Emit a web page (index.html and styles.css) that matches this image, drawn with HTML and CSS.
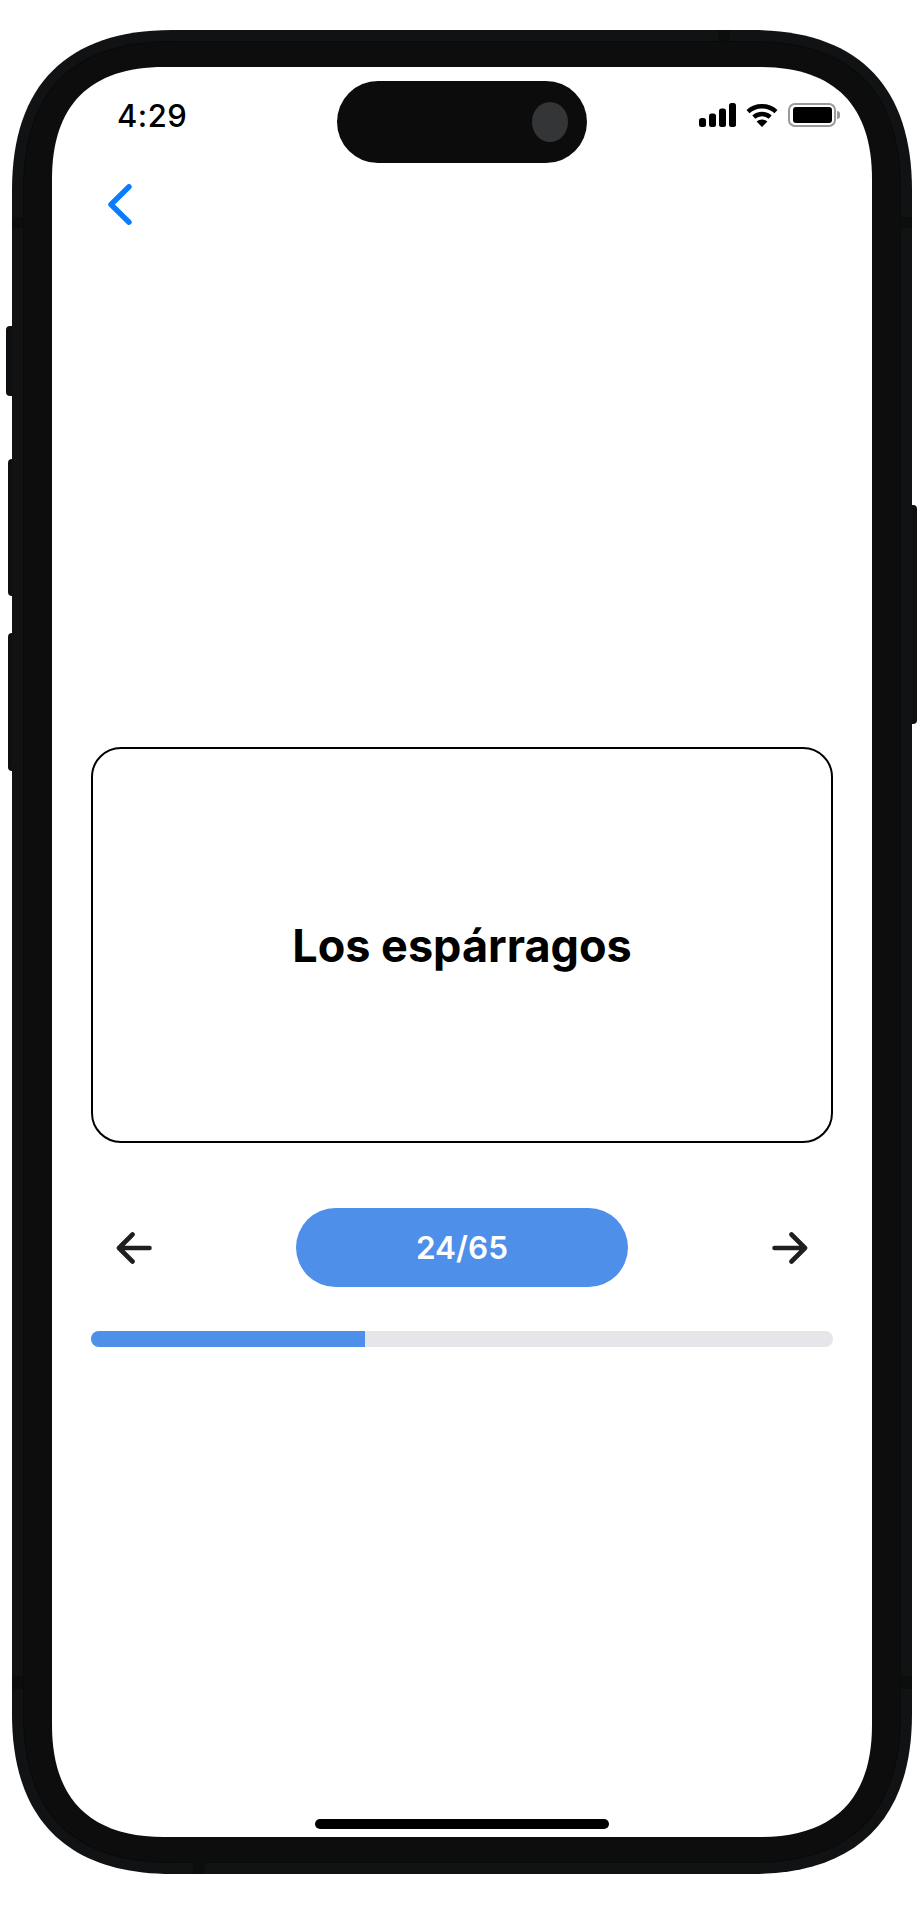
FILE: index.html
```html
<!DOCTYPE html>
<html lang="es">
<head>
    <meta charset="UTF-8">
    <title>Los espárragos</title>
    <link rel="stylesheet" href="styles.css">
</head>
<body>
<div class="phone">
    <span class="side-btn mute"></span>
    <span class="side-btn vol-up"></span>
    <span class="side-btn vol-down"></span>
    <span class="side-btn power"></span>
    <div class="shell">
        <span class="band band-top"></span>
        <span class="band band-bottom"></span>
        <span class="band band-left-a"></span>
        <span class="band band-left-b"></span>
        <span class="band band-right-a"></span>
        <span class="band band-right-b"></span>
        <div class="rim">
            <div class="bezel">
                <div class="screen">
                    <div class="status-bar">
                        <span class="time">4:29</span>
                        <div class="island"><span class="camera"></span></div>
                        <div class="status-icons">
                            <svg width="37" height="24" viewBox="0 0 37 24" fill="#000">
                                <rect x="0" y="15" width="7" height="9" rx="2.5"/>
                                <rect x="10" y="10.5" width="7" height="13.5" rx="2.5"/>
                                <rect x="20" y="5.5" width="7" height="18.5" rx="2.5"/>
                                <rect x="30" y="0" width="7" height="24" rx="2.5"/>
                            </svg>
                            <svg width="32" height="24" viewBox="0 0 32 24" fill="none" stroke="#000" stroke-width="4.4">
                                <path d="M2 8.6C9.8 1.4 22.2 1.4 30 8.6"/>
                                <path d="M7.8 14.2C12.4 10 19.6 10 24.2 14.2"/>
                                <path d="M16 24L10.6 18.6C13.6 15.9 18.4 15.9 21.4 18.6Z" fill="#000" stroke="none"/>
                            </svg>
                            <div class="battery">
                                <div class="battery-body"><span class="battery-level"></span></div>
                                <span class="battery-tip"></span>
                            </div>
                        </div>
                    </div>

                    <button class="back-btn">
                        <svg width="24" height="41" viewBox="0 0 24 41" fill="none" stroke="#0a7cff" stroke-width="5.4" stroke-linecap="round" stroke-linejoin="round">
                            <path d="M21 2.8L3 20.5L21 38.2"/>
                        </svg>
                    </button>

                    <div class="deck">
                        <div class="card">Los espárragos</div>
                        <div class="nav-row">
                            <svg class="arrow" width="36" height="32" viewBox="0 0 36 32" fill="none" stroke="#1f1f1f" stroke-width="4.6" stroke-linecap="round" stroke-linejoin="round">
                                <path d="M33.5 16H3.5M16.5 2.5L3 16L16.5 29.5"/>
                            </svg>
                            <div class="counter">24/65</div>
                            <svg class="arrow" width="36" height="32" viewBox="0 0 36 32" fill="none" stroke="#1f1f1f" stroke-width="4.6" stroke-linecap="round" stroke-linejoin="round">
                                <path d="M2.5 16H32.5M19.5 2.5L33 16L19.5 29.5"/>
                            </svg>
                        </div>
                        <div class="progress">
                            <div class="progress-fill" style="width: 36.92%"></div>
                        </div>
                    </div>

                    <div class="home-indicator"></div>
                </div>
            </div>
        </div>
    </div>
</div>
</body>
</html>
```

FILE: styles.css
```css
body {
    margin: 0;
    background: #fff;
    font-family: Inter, "Liberation Sans", sans-serif;
}
.phone {
    position: relative;
    width: 900px;
    height: 1844px;
    margin: 30px 0 0 12px;
}
.side-btn {
    position: absolute;
    background: #0e0f10;
}
.mute {
    left: -6px;
    top: 296px;
    width: 6px;
    height: 70px;
    border-radius: 4px 0 0 4px;
}
.vol-up {
    left: -4px;
    top: 429px;
    width: 4px;
    height: 137px;
    border-radius: 4px 0 0 4px;
}
.vol-down {
    left: -4px;
    top: 603px;
    width: 4px;
    height: 138px;
    border-radius: 4px 0 0 4px;
}
.power {
    right: -5px;
    top: 475px;
    width: 5px;
    height: 219px;
    border-radius: 0 4px 4px 0;
}

/* the corners are squircles, so border-radius is not close enough */
.shell {
    position: relative;
    height: 100%;
    padding: 11px;
    box-sizing: border-box;
    background: #101214;
    clip-path: path("M0 160C0 55 55 0 160 0H740C845 0 900 55 900 160V1684C900 1789 845 1844 740 1844H160C55 1844 0 1789 0 1684Z");
}
.rim {
    height: 100%;
    padding: 1px;
    box-sizing: border-box;
    background: #090a0a;
    clip-path: path("M0 150C0 49 49 0 150 0H728C829 0 878 49 878 150V1672C878 1773 829 1822 728 1822H150C49 1822 0 1773 0 1672Z");
}
.bezel {
    height: 100%;
    padding: 25px 28px;
    box-sizing: border-box;
    background: #0d0d0d;
    clip-path: path("M0 149C0 49 49 0 149 0H727C827 0 876 49 876 149V1671C876 1771 827 1820 727 1820H149C49 1820 0 1771 0 1671Z");
}
.screen {
    display: flex;
    flex-direction: column;
    height: 100%;
    background: #fff;
    clip-path: path("M0 112C0 38 38 0 112 0H708C782 0 820 38 820 112V1658C820 1732 782 1770 708 1770H112C38 1770 0 1732 0 1658Z");
}
.band {
    position: absolute;
    background: #0c0d0d;
}
.band-top {
    left: 706px;
    top: 0;
    width: 12px;
    height: 11px;
}
.band-bottom {
    left: 181px;
    bottom: 0;
    width: 12px;
    height: 11px;
}
.band-left-a,
.band-left-b {
    left: 0;
    width: 11px;
}
.band-right-a,
.band-right-b {
    right: 0;
    width: 11px;
}
.band-left-a,
.band-right-a {
    top: 187px;
    height: 11px;
}
.band-left-b,
.band-right-b {
    top: 1646px;
    height: 13px;
}

.status-bar {
    display: grid;
    grid-template-columns: 1fr auto 1fr;
    padding-top: 14px;
}
.time {
    font-size: 31px;
    font-weight: 500;
    letter-spacing: 0.5px;
    color: #000;
    line-height: 36px;
    padding: 17px 0 0 65px;
}
.island {
    display: flex;
    justify-content: flex-end;
    align-items: center;
    width: 250px;
    height: 82px;
    padding-right: 19px;
    box-sizing: border-box;
    background: #0c0c0c;
    border-radius: 41px;
}
.camera {
    width: 36px;
    height: 40px;
    background: #343537;
    border-radius: 50%;
}
.status-icons {
    display: flex;
    justify-content: flex-end;
    align-items: flex-start;
    gap: 10px;
    padding: 22px 32px 0 0;
}
.battery {
    display: flex;
    align-items: center;
}
.battery-body {
    width: 48px;
    height: 24px;
    padding: 2px 2.5px;
    box-sizing: border-box;
    border: 2px solid #9a9a9a;
    border-radius: 7px;
}
.battery-level {
    display: block;
    height: 100%;
    background: #000;
    border-radius: 3px;
}
.battery-tip {
    width: 3px;
    height: 8px;
    margin-left: 1px;
    background: #9a9a9a;
    border-radius: 0 3px 3px 0;
}
.back-btn {
    display: block;
    width: 24px;
    height: 41px;
    margin: 21px 0 0 56px;
    padding: 0;
    border: 0;
    background: none;
}
.back-btn svg {
    display: block;
}
.deck {
    margin: 522px 39px 0;
}
.card {
    display: flex;
    align-items: center;
    justify-content: center;
    height: 396px;
    box-sizing: border-box;
    border: 2px solid #000;
    border-radius: 30px;
    font-size: 45px;
    font-weight: 700;
    color: #000;
}
.nav-row {
    display: flex;
    justify-content: space-between;
    align-items: center;
    height: 79px;
    margin-top: 65px;
    padding: 0 25px;
}
.counter {
    width: 332px;
    height: 79px;
    line-height: 79px;
    text-align: center;
    background: #4e8fea;
    border-radius: 40px;
    color: #fff;
    font-size: 31.5px;
    font-weight: 600;
}
.progress {
    height: 16px;
    margin-top: 44px;
    background: #e5e5ea;
    border-radius: 8px;
    overflow: hidden;
}
.progress-fill {
    height: 100%;
    background: #4e8fea;
}
.home-indicator {
    width: 294px;
    height: 10px;
    margin: auto auto 8px;
    background: #000;
    border-radius: 5px;
}
```
